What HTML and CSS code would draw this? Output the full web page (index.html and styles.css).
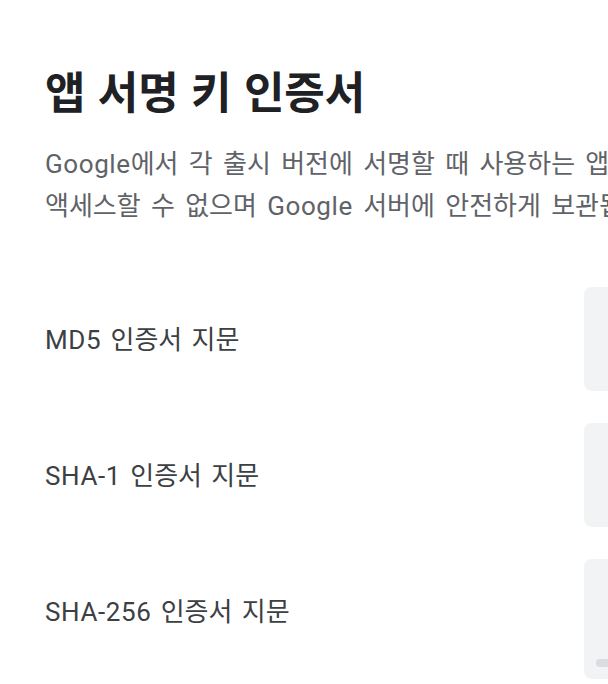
FILE: index.html
```html
<!DOCTYPE html>
<html lang="ko">
<head>
  <meta charset="UTF-8" />
  <meta name="viewport" content="width=device-width, initial-scale=1.0"/>
  <title>앱 서명 키 인증서</title>
  <link rel="stylesheet" href="styles.css">
</head>
<body>

<div class="page">
  <h1>앱 서명 키 인증서</h1>
  <p class="desc"><span class="en">Google</span>에서 각 출시 버전에 서명할 때 사용하는 앱 서명 키의 공개 인증서입니다. 앱 서명 키는 개발자가<br>액세스할 수 없으며 <span class="en">Google</span> 서버에 안전하게 보관됩니다.</p>

  <div class="cert-list">
    <div class="cert-row">
      <div class="cert-label"><span class="en">MD5</span> 인증서 지문</div>
      <div class="cert-box">
        <code>3A:5F:91:0C:7E:22:B4:D8:6A:11:E9:40:C3:7B:2D:58</code>
      </div>
    </div>
    <div class="cert-row">
      <div class="cert-label"><span class="en">SHA-1</span> 인증서 지문</div>
      <div class="cert-box">
        <code>8C:1D:44:A2:9F:63:0E:B7:52:E8:17:C9:6D:3A:F0:25:84:BB:71:0D</code>
      </div>
    </div>
    <div class="cert-row">
      <div class="cert-label"><span class="en">SHA-256</span> 인증서 지문</div>
      <div class="cert-box cert-box-scroll">
        <code>D2:47:9A:0B:6E:31:C8:F5:12:7D:A4:E0:58:93:BC:26:4F:71:0A:DE:85:3C:96:E2:1B:47:F8:60:AD:2C:59:13</code>
        <div class="scrollbar"><div class="scroll-thumb"></div></div>
      </div>
    </div>
  </div>
</div>

</body>
</html>
```

FILE: styles.css
```css
html, body {
  margin: 0;
  padding: 0;
  background-color: #ffffff;
  overflow: hidden;
}
body {
  font-family: "Noto Sans CJK KR", sans-serif;
  color: #3c4043;
}
.page {
  width: 1500px;
  padding: 58px 0 0 45px;
}
h1 {
  font-size: 44px;
  font-weight: 700;
  color: #202124;
  margin: 0;
  line-height: 64px;
}
.desc {
  font-size: 26px;
  line-height: 40px;
  color: #5f6368;
  margin: 20px 0 0 0;
  word-spacing: 3px;
}
.en {
  font-family: Roboto, sans-serif;
  font-size: 26px;
  letter-spacing: 0.6px;
  word-spacing: 0;
}
.cert-list {
  margin-top: 61px;
  display: flex;
  flex-direction: column;
  gap: 32px;
}
.cert-row {
  display: flex;
  align-items: flex-start;
}
.cert-label {
  width: 539px;
  font-size: 26px;
  line-height: 32px;
  padding-top: 35px;
  color: #3c4043;
  word-spacing: 2px;
}
.cert-box {
  background-color: #f1f3f4;
  border-radius: 8px;
  width: 760px;
  height: 104px;
  box-sizing: border-box;
  padding: 35px 24px;
  position: relative;
}
.cert-box code {
  font-family: "Liberation Mono", monospace;
  font-size: 22px;
  line-height: 32px;
  color: #202124;
  white-space: nowrap;
}
.cert-box-scroll {
  height: 120px;
}
.scrollbar {
  position: absolute;
  left: 12px;
  right: 12px;
  bottom: 12px;
  height: 8px;
}
.scroll-thumb {
  width: 60%;
  height: 8px;
  border-radius: 4px;
  background-color: #dadce0;
}
```
